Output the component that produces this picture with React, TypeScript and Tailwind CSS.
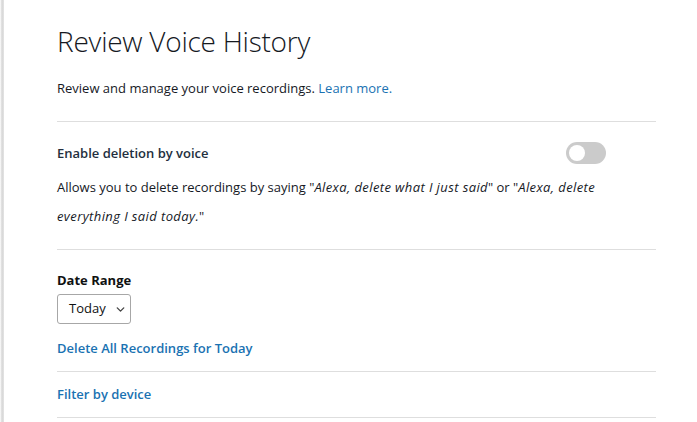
import { ChevronDown } from "lucide-react";

export default function App() {
  return (
    <div className="w-[697px] h-[422px] overflow-hidden bg-white flex">
      <div className="w-[4px] shrink-0 bg-gradient-to-r from-white via-[#d6d6d6] to-[#e4e4e4]" />
      <div className="flex-1 pl-[53px] pr-[41px] pt-[23px] font-['Open_Sans',sans-serif] text-[#16191f]">
        <h1 className="text-[28px] font-light leading-[36px] tracking-[-0.25px]">Review Voice History</h1>
        <p className="mt-[19px] text-[13px] leading-[20px]">
          Review and manage your voice recordings. <span className="text-[#1a72b2]">Learn more.</span>
        </p>
        <div className="mt-[23px] border-t border-[#dedede]" />

        <div className="flex items-center justify-between pt-[20px] pr-[50px]">
          <span className="text-[13px] font-semibold leading-[22px] text-[#232f3e]">Enable deletion by voice</span>
          <span className="w-[40px] h-[22px] rounded-full bg-[#cbcbcb] flex items-center pl-[3px]">
            <span className="w-[16px] h-[16px] rounded-full bg-white" />
          </span>
        </div>
        <p className="mt-[9px] text-[13px] leading-[29px] pr-[40px]">
          Allows you to delete recordings by saying "<i className="tracking-[0.4px]">Alexa, delete what I just said</i>" or "<i className="tracking-[0.4px]">Alexa, delete everything I said today.</i>"
        </p>
        <div className="mt-[18px] border-t border-[#dedede]" />

        <div className="pt-[20px] text-[13px] font-bold leading-[20px] text-[#0f1111]">Date Range</div>
        <div className="mt-[4px] w-[74px] h-[30px] border border-[#a7a7a7] rounded-[3px] flex items-center gap-[8px] pl-[11px] text-[13px] text-[#0f1111]">
          Today <ChevronDown size={13} strokeWidth={2.5} className="text-[#444]" />
        </div>
        <div className="mt-[14px] text-[13px] font-semibold leading-[20px] text-[#1a72b2]">Delete All Recordings for Today</div>
        <div className="mt-[13px] border-t border-[#dedede]" />
        <div className="pt-[12px] text-[13px] font-semibold leading-[20px] text-[#1a72b2]">Filter by device</div>
        <div className="mt-[13px] border-t border-[#dedede]" />
      </div>
    </div>
  );
}
